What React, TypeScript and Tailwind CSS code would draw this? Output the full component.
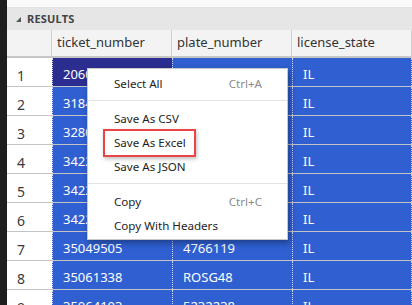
const rows = [
  { n: 1, ticket: "20603751", plate: "", state: "IL" },
  { n: 2, ticket: "31845102", plate: "", state: "IL" },
  { n: 3, ticket: "32801847", plate: "", state: "IL" },
  { n: 4, ticket: "34227910", plate: "", state: "IL" },
  { n: 5, ticket: "34228311", plate: "", state: "IL" },
  { n: 6, ticket: "34229064", plate: "", state: "IL" },
  { n: 7, ticket: "35049505", plate: "4766119", state: "IL" },
  { n: 8, ticket: "35061338", plate: "ROSG48", state: "IL" },
  { n: 9, ticket: "35064103", plate: "5232238", state: "IL" },
];

const font = { fontFamily: '"Noto Sans", "Open Sans", sans-serif' };

function MenuItem({ label, shortcut }: { label: string; shortcut?: string }) {
  return (
    <div className="flex h-[24px] items-center justify-between pl-[26px] pr-[25px] text-[11.6px] text-[#1e1e1e]">
      <span>{label}</span>
      {shortcut && <span className="text-[#8a8a8a]">{shortcut}</span>}
    </div>
  );
}

function Separator() {
  return <div className="mt-[4px] mb-[6px] h-px bg-[#e3e3e3]" />;
}

export default function App() {
  return (
    <div className="relative flex h-[305px] w-[412px] overflow-hidden bg-white" style={font}>
      <div className="w-[7px] shrink-0 bg-[#1e1e1e]" />
      <div className="flex min-w-0 flex-1 flex-col">
        <div className="h-[8px] shrink-0 border-b border-[#e2e2e2] bg-[#fafafa]" />
        <div className="flex h-[22px] shrink-0 items-center gap-[6px] bg-[#e6e6e6] pl-[9px]">
          <svg width="5" height="5" viewBox="0 0 5 5">
            <polygon points="5,0 5,5 0,5" fill="#555" />
          </svg>
          <span className="text-[11px] font-bold tracking-[0.2px] text-[#444]">RESULTS</span>
        </div>
        <div className="grid h-[28px] shrink-0 grid-cols-[45px_120px_120px_1fr] border-b-2 border-[#c6c6c6] bg-[#f3f3f3] text-[13px] text-[#333]">
          <div className="border-r border-[#cfcfcf]" />
          <div className="flex items-center border-r border-[#cfcfcf] pl-[5px]">ticket_number</div>
          <div className="flex items-center border-r border-[#cfcfcf] pl-[5px]">plate_number</div>
          <div className="flex items-center border-r border-[#cfcfcf] pl-[5px]">license_state</div>
        </div>
        {rows.map((r) => (
          <div
            key={r.n}
            className="grid h-[29px] shrink-0 grid-cols-[45px_120px_120px_1fr] border-b border-[#c4c4c4] text-[13px]"
          >
            <div className="flex items-center pl-[10px] pt-[6px] text-[14px] text-[#3a3a3a]">{r.n}</div>
            <div
              className={`flex items-center border-l border-dotted border-[#cfd8f5] pl-[10px] pt-[6px] text-white ${
                r.n === 1 ? "bg-[#2b2e90]" : "bg-[#2f5fd1]"
              }`}
            >
              {r.ticket}
            </div>
            <div className="flex items-center border-l border-dotted border-[#cfd8f5] bg-[#2f5fd1] pl-[10px] pt-[6px] text-white">
              {r.plate}
            </div>
            <div className="flex items-center border-x border-dotted border-[#cfd8f5] bg-[#2f5fd1] pl-[10px] pt-[6px] text-white">
              {r.state}
            </div>
          </div>
        ))}
      </div>

      <div className="absolute left-[87px] top-[68px] w-[201px] border border-[#c8c8c8] bg-white pt-[3px] pb-px shadow-[2px_3px_6px_rgba(0,0,0,0.35)]">
        <MenuItem label="Select All" shortcut="Ctrl+A" />
        <Separator />
        <MenuItem label="Save As CSV" />
        <div className="relative">
          <MenuItem label="Save As Excel" />
          <div className="absolute left-[15px] top-[-2px] h-[28px] w-[93px] border-2 border-[#e94545] shadow-[1px_2px_4px_rgba(0,0,0,0.25)]" />
        </div>
        <MenuItem label="Save As JSON" />
        <Separator />
        <MenuItem label="Copy" shortcut="Ctrl+C" />
        <MenuItem label="Copy With Headers" />
      </div>
    </div>
  );
}
